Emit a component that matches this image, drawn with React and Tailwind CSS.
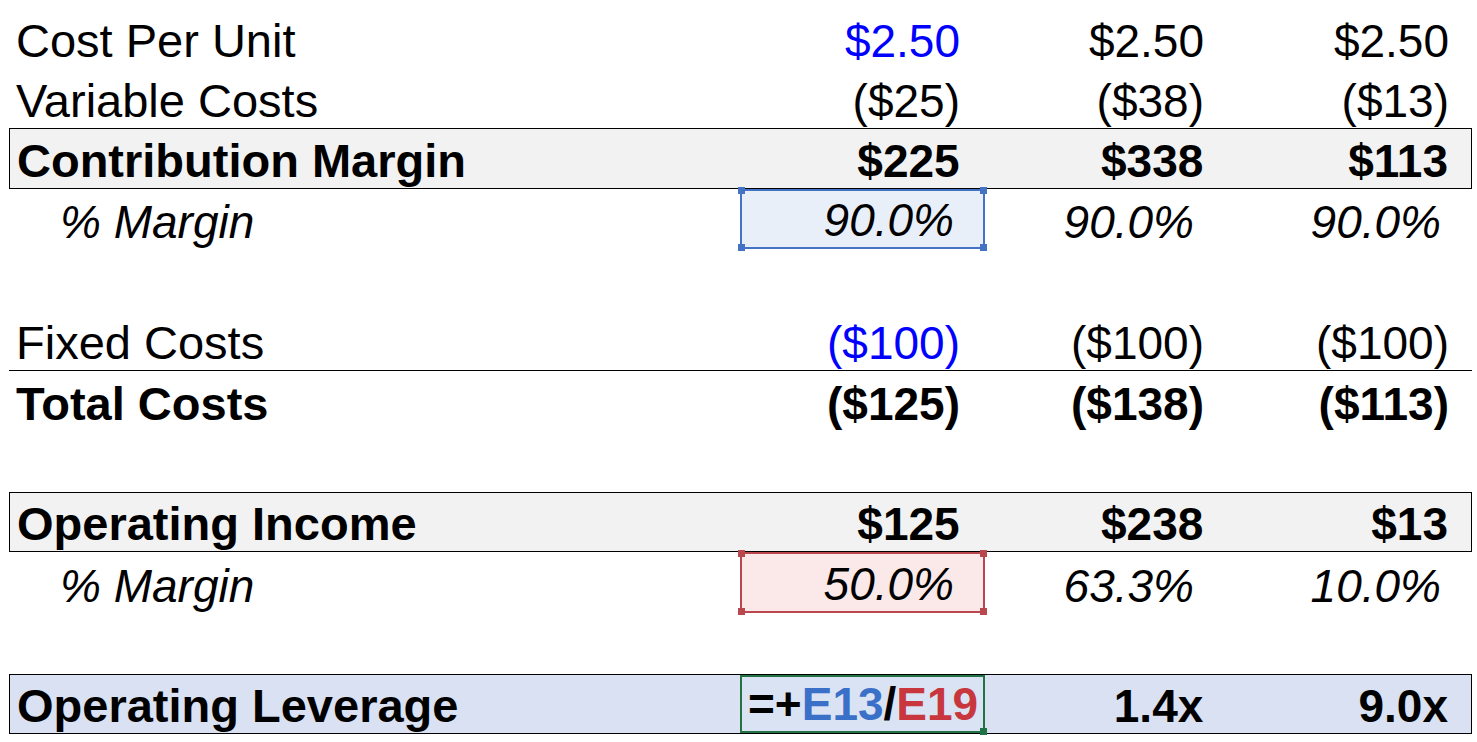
const rows = [
  { label: "Cost Per Unit", vals: ["$2.50", "$2.50", "$2.50"], firstBlue: true },
  { label: "Variable Costs", vals: ["($25)", "($38)", "($13)"] },
  { label: "Contribution Margin", vals: ["$225", "$338", "$113"], bold: true, band: "gray" },
  { label: "% Margin", vals: ["90.0%", "90.0%", "90.0%"], pct: true, pick: "blue" },
  { empty: true },
  { label: "Fixed Costs", vals: ["($100)", "($100)", "($100)"], firstBlue: true, underline: true },
  { label: "Total Costs", vals: ["($125)", "($138)", "($113)"], bold: true },
  { empty: true },
  { label: "Operating Income", vals: ["$125", "$238", "$13"], bold: true, band: "gray" },
  { label: "% Margin", vals: ["50.0%", "63.3%", "10.0%"], pct: true, pick: "red" },
  { empty: true },
  { label: "Operating Leverage", vals: ["formula", "1.4x", "9.0x"], bold: true, band: "blue" },
];

const widths = ["w-[245px]", "w-[244px]", "w-[243px]"];
const padNum = ["pr-[25px]", "pr-[25px]", "pr-[23px]"];
const padPct = ["pr-[31px]", "pr-[35px]", "pr-[31px]"];

function Handle({ pos, color }) {
  return <span className={`absolute w-[7px] h-[7px] ${pos} ${color}`} />;
}

function Formula() {
  return (
    <div className="relative w-[245px] h-full border-2 border-[#217346] flex items-end pl-[6px] bg-[#dae3f3]">
      <span className="font-bold">
        =+<span className="text-[#3b70c8]">E13</span>/<span className="text-[#c8373e]">E19</span>
      </span>
      <Handle pos="-right-[4px] -bottom-[4px]" color="bg-[#217346]" />
    </div>
  );
}

function Picked({ value, tone, w }) {
  const box =
    tone === "blue"
      ? "border-[#4472c4] bg-[#e9eff8]"
      : "border-[#b9474d] bg-[#fbe9e9]";
  const dot = tone === "blue" ? "bg-[#4472c4]" : "bg-[#b9474d]";
  return (
    <div className={`relative ${w} h-full border-2 ${box} flex items-end justify-end pr-[29px] italic`}>
      {value}
      <Handle pos="-left-[4px] -top-[4px]" color={dot} />
      <Handle pos="-right-[4px] -top-[4px]" color={dot} />
      <Handle pos="-left-[4px] -bottom-[4px]" color={dot} />
      <Handle pos="-right-[4px] -bottom-[4px]" color={dot} />
    </div>
  );
}

function Row({ r }) {
  if (r.empty) return <div className="h-[60.6px]" />;
  const band =
    r.band === "gray"
      ? "bg-[#f2f2f2] border border-black"
      : r.band === "blue"
      ? "bg-[#d9e1f2] border border-black"
      : r.underline
      ? "border-b border-black"
      : "";
  return (
    <div className={`flex h-[60.6px] ${band} ${r.bold ? "font-bold" : ""}`}>
      <div className={`w-[731px] flex items-end ${r.pct ? "pl-[51px] italic" : "pl-[7px] text-[47px]"}`}>
        {r.label}
      </div>
      {r.vals.map((v, i) => {
        if (v === "formula") return <Formula key={i} />;
        if (i === 0 && r.pick) return <Picked key={i} value={v} tone={r.pick} w={widths[i]} />;
        return (
          <div
            key={i}
            className={`${widths[i]} flex items-end justify-end ${
              r.pct ? `italic ${padPct[i]}` : padNum[i]
            } ${i === 0 && r.firstBlue ? "text-[#0000ff]" : ""}`}
          >
            {v}
          </div>
        );
      })}
    </div>
  );
}

export default function App() {
  return (
    <div className="w-[1477px] h-[742px] bg-white overflow-hidden pt-[7px] pl-[9px] text-black text-[46px] leading-[normal] font-['Liberation_Sans',Arial,sans-serif]">
      <div className="w-[1463px]">
        {rows.map((r, i) => (
          <Row key={i} r={r} />
        ))}
      </div>
    </div>
  );
}
